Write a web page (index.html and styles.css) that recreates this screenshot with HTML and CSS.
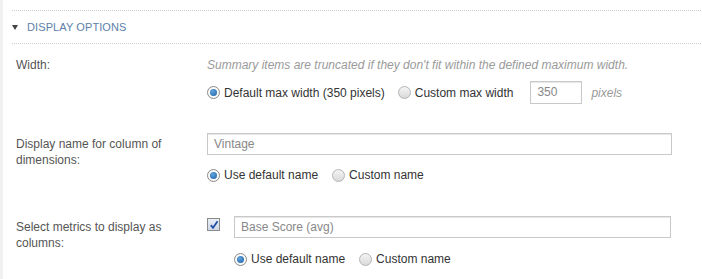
FILE: index.html
```html
<!DOCTYPE html>
<html lang="en">

<head>
    <meta charset="UTF-8">
    <title>Display options</title>
    <link rel="stylesheet" href="styles.css">
</head>

<body>
    <div class="panel">
        <div class="section-head">
            <span class="caret"></span>
            <span class="title">Display Options</span>
        </div>

        <div class="row">
            <div class="label">Width:</div>
            <div class="field">
                <div class="hint">Summary items are truncated if they don't fit within the defined maximum width.</div>
                <div class="options options-width">
                    <label class="opt"><span class="radio checked"></span>Default max width (350 pixels)</label>
                    <label class="opt"><span class="radio"></span>Custom max width</label>
                    <span class="box small">350</span>
                    <span class="unit">pixels</span>
                </div>
            </div>
        </div>

        <div class="row row-name">
            <div class="label">Display name for column of dimensions:</div>
            <div class="field">
                <div class="box wide">Vintage</div>
                <div class="options">
                    <label class="opt"><span class="radio checked"></span>Use default name</label>
                    <label class="opt"><span class="radio"></span>Custom name</label>
                </div>
            </div>
        </div>

        <div class="row row-metrics">
            <div class="label">Select metrics to display as columns:</div>
            <div class="field metric">
                <span class="check">
                    <svg width="10" height="10" viewBox="0 0 10 10"><path d="M1.8 5.2 L4 7.8 L8.6 1.2" fill="none" stroke="#2350a6" stroke-width="1.8"/></svg>
                </span>
                <div class="metric-body">
                    <div class="box">Base Score (avg)</div>
                    <div class="options">
                        <label class="opt"><span class="radio checked"></span>Use default name</label>
                        <label class="opt"><span class="radio"></span>Custom name</label>
                    </div>
                </div>
            </div>
        </div>
    </div>
</body>

</html>
```

FILE: styles.css
```css
body {
    margin: 0;
    background: #fff;
    font-family: "Liberation Sans", Arial, sans-serif;
    font-size: 12px;
    color: #555;
}
.panel {
    height: 279px;
    border-left: 3px solid #f1f1f1;
    box-sizing: border-box;
    padding-top: 10px;
}
.section-head {
    margin: 0 1px 0 9px;
    height: 32px;
    border-top: 1px dotted #cfcfcf;
    border-bottom: 1px dotted #cfcfcf;
    display: flex;
    align-items: center;
}
.caret {
    width: 0;
    height: 0;
    border-left: 3.5px solid transparent;
    border-right: 3.5px solid transparent;
    border-top: 5px solid #444;
    margin: 0 9px 0 0;
}
.title {
    font-size: 11px;
    text-transform: uppercase;
    color: #5d7faa;
    letter-spacing: 0.1px;
}
.row {
    display: grid;
    grid-template-columns: 191px 1fr;
    padding-left: 13px;
    margin-top: 13px;
}
.row-name {
    margin-top: 29px;
}
.row-metrics {
    margin-top: 33px;
}
.label {
    line-height: 16px;
    color: #555;
    width: 150px;
}
.row-name .label, .row-metrics .label {
    padding-top: 3px;
}
.hint {
    font-style: italic;
    color: #9a9a9a;
    line-height: 16px;
}
.options {
    display: flex;
    align-items: center;
    gap: 14px;
    margin-top: 12px;
    line-height: 16px;
    color: #333;
}
.options-width {
    margin-top: 8px;
    gap: 13px;
}
.opt {
    display: flex;
    align-items: center;
    gap: 4px;
}
.radio {
    width: 13px;
    height: 13px;
    border-radius: 50%;
    box-sizing: border-box;
    border: 1px solid #b4b4b4;
    background: linear-gradient(#f4f4f4, #d9d9d9);
    display: inline-block;
    position: relative;
}
.radio.checked {
    border-color: #8a8a8a;
    background: #fafafa;
}
.radio.checked::after {
    content: "";
    position: absolute;
    left: 2px;
    top: 2px;
    width: 7px;
    height: 7px;
    border-radius: 50%;
    background: radial-gradient(circle at 40% 35%, #5fa3de, #1d5fa3);
}
.box {
    height: 22px;
    box-sizing: border-box;
    border: 1px solid #c9c9c9;
    box-shadow: inset 0 1px 1px #e6e6e6;
    padding: 0 6px;
    line-height: 20px;
    color: #888;
    font-size: 12px;
}
.box.wide {
    width: 465px;
}
.box.small {
    width: 52px;
    height: 23px;
    line-height: 21px;
    margin-left: 4px;
}
.unit {
    font-style: italic;
    color: #9a9a9a;
    margin-left: -4px;
}
.metric {
    display: flex;
    gap: 14px;
}
.check {
    width: 13px;
    height: 13px;
    box-sizing: border-box;
    border: 1px solid #8c8c8c;
    background: linear-gradient(#e9eef6, #cfd8e6);
    margin-top: 2px;
    display: flex;
    align-items: center;
    justify-content: center;
}
.metric-body .box {
    width: 437px;
}
.metric-body .options {
    margin-top: 13px;
}
```
